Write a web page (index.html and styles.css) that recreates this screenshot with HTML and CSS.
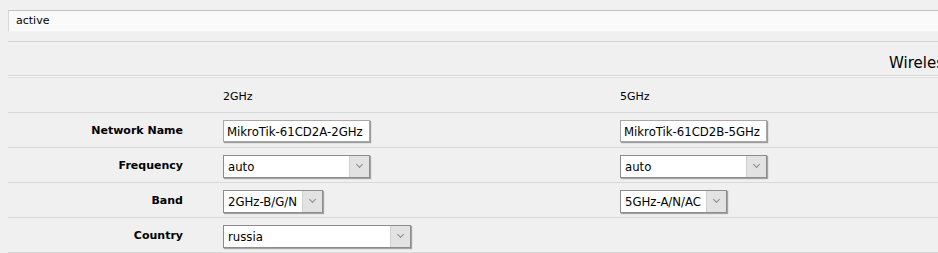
FILE: index.html
```html
<!DOCTYPE html>
<html lang="en">
<head>
    <meta charset="UTF-8">
    <title>Quick Set - WebFig</title>
    <link rel="stylesheet" href="styles.css">
</head>
<body>
    <div class="page">
        <div class="status-bar">active</div>

        <div class="spacer"></div>

        <div class="section-title">
            <span>Wireless</span>
        </div>

        <div class="form-grid">
            <div class="row head">
                <div class="label"></div>
                <div class="cell">2GHz</div>
                <div class="cell">5GHz</div>
            </div>
            <div class="row">
                <div class="label">Network Name</div>
                <div class="cell"><input class="field" type="text" value="MikroTik-61CD2A-2GHz"></div>
                <div class="cell"><input class="field" type="text" value="MikroTik-61CD2B-5GHz"></div>
            </div>
            <div class="row">
                <div class="label">Frequency</div>
                <div class="cell">
                    <div class="select wide"><span>auto</span><i class="arrow"></i></div>
                </div>
                <div class="cell">
                    <div class="select wide"><span>auto</span><i class="arrow"></i></div>
                </div>
            </div>
            <div class="row">
                <div class="label">Band</div>
                <div class="cell">
                    <div class="select band"><span>2GHz-B/G/N</span><i class="arrow"></i></div>
                </div>
                <div class="cell">
                    <div class="select band5"><span>5GHz-A/N/AC</span><i class="arrow"></i></div>
                </div>
            </div>
            <div class="row">
                <div class="label">Country</div>
                <div class="cell">
                    <div class="select country"><span>russia</span><i class="arrow"></i></div>
                </div>
                <div class="cell"></div>
            </div>
        </div>
    </div>
</body>
</html>
```

FILE: styles.css
```css
body {
    margin: 0;
    background-color: #f0f0f0;
    font-family: 'DejaVu Sans', Verdana, sans-serif;
    font-size: 11px;
    color: #000;
    overflow: hidden;
}

.page {
    padding: 10px 0 0 8px;
    width: 1100px;
}

.status-bar {
    height: 20px;
    line-height: 20px;
    padding-left: 7px;
    background-color: #fafafa;
    border-top: 1px solid #c4c4c4;
    border-left: 1px solid #d8d8d8;
    border-bottom: 1px solid #f4f4f4;
}

.spacer {
    height: 9px;
    border-bottom: 1px solid #d4d4d4;
}

.section-title {
    height: 33px;
    border-bottom: 1px solid #d4d4d4;
    box-shadow: 0 1px 0 #fafafa, 0 2px 0 #dcdcdc;
    font-size: 15px;
    padding-left: 881px;
    line-height: 43px;
    white-space: nowrap;
}

.form-grid {
    margin-top: 2px;
}

.row {
    display: grid;
    grid-template-columns: 175px 357px 1fr;
    column-gap: 40px;
    align-items: center;
    height: 34px;
    border-bottom: 1px solid #d8d8d8;
}

.row.head .cell {
    padding-top: 2px;
}

.label {
    text-align: right;
    font-weight: bold;
}

.cell {
    display: flex;
    align-items: center;
}

.field {
    box-sizing: border-box;
    width: 147px;
    height: 22px;
    padding: 0 3px;
    margin-top: 2px;
    border: 1px solid #a8a8a8;
    box-shadow: 1px 1px 1px #9c9c9c;
    background-color: #fff;
    font-family: 'DejaVu Sans Condensed', 'DejaVu Sans', sans-serif;
    font-size: 13px;
    color: #000;
    outline: none;
}

.select {
    box-sizing: border-box;
    display: flex;
    height: 23px;
    margin-top: 2px;
    border: 1px solid #8c8c8c;
    box-shadow: 1px 1px 1px #a4a4a4;
    background-color: #fff;
    font-family: 'DejaVu Sans Condensed', 'DejaVu Sans', sans-serif;
    font-size: 13px;
}

.select span {
    flex: 1;
    padding-left: 4px;
    line-height: 21px;
    white-space: nowrap;
}

.select .arrow {
    width: 19px;
    background-color: #e2e2e2;
    border-left: 1px solid #d0d0d0;
    position: relative;
}

.select .arrow::after {
    content: "";
    position: absolute;
    left: 7px;
    top: 6px;
    width: 4px;
    height: 4px;
    border-right: 1px solid #8a8a8a;
    border-bottom: 1px solid #8a8a8a;
    transform: rotate(45deg);
}

.select.wide {
    width: 147px;
}

.select.band {
    width: 100px;
}

.select.band5 {
    width: 107px;
}

.select.country {
    width: 188px;
}
```
